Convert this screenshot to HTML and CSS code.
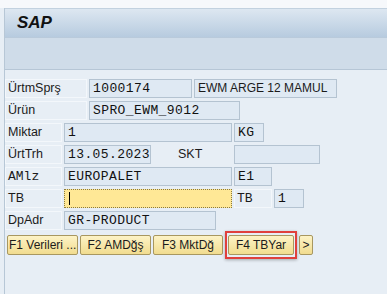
FILE: index.html
```html
<!DOCTYPE html>
<html lang="tr">
<head>
<meta charset="UTF-8">
<title>SAP</title>
<link rel="stylesheet" href="styles.css">
</head>
<body>
<div class="top"></div>
<div class="win">
    <div class="tb-title">SAP</div>
    <div class="tb-tools"></div>
    <div class="ct">
        <div class="r">
            <div class="lb w1">ÜrtmSprş</div>
            <div class="in m" style="width:103px">1000174</div>
            <div class="in s" style="width:143px">EWM ARGE 12 MAMUL</div>
        </div>
        <div class="r">
            <div class="lb w1">Ürün</div>
            <div class="in m" style="width:151px">SPRO_EWM_9012</div>
        </div>
        <div class="r">
            <div class="lb w2">Miktar</div>
            <div class="in m" style="width:168px">1</div>
            <div class="in m" style="width:30px">KG</div>
        </div>
        <div class="r">
            <div class="lb w2">ÜrtTrh</div>
            <div class="in m" style="width:87px">13.05.2023</div>
            <div class="lb skt">SKT</div>
            <div class="in m" style="width:86px"></div>
        </div>
        <div class="r">
            <div class="lb w2 lm">AMlz</div>
            <div class="in m" style="width:168px">EUROPALET</div>
            <div class="in m" style="width:38px">E1</div>
        </div>
        <div class="r">
            <div class="lb w2">TB</div>
            <div class="in m act" style="width:168px"><span class="cur"></span></div>
            <div class="lb lm tbl">TB</div>
            <div class="in m" style="width:30px">1</div>
        </div>
        <div class="r">
            <div class="lb w2">DpAdr</div>
            <div class="in m" style="width:152px">GR-PRODUCT</div>
        </div>
        <div class="btns">
            <button class="bt" style="width:71px">F1 Verileri ...</button>
            <button class="bt" style="width:71px">F2 AMDğş</button>
            <button class="bt" style="width:70px">F3 MktDğ</button>
            <span class="hl"><button class="bt" style="width:66px">F4 TBYar</button></span>
            <button class="bt" style="width:14px">&gt;</button>
        </div>
    </div>
</div>
</body>
</html>
```

FILE: styles.css
```css
*{margin:0;padding:0;box-sizing:border-box}
body{background:#e7eef5;font-family:'Liberation Sans',Arial,sans-serif;color:#1b1b1b;width:387px;height:294px;overflow:hidden}

/* window frame */
.top{height:8px;background:#f6f8fb}
.win{margin-left:4px;border-left:1px solid #b7c7d6;height:286px;background:#e7eef5}
.tb-title{height:30px;background:linear-gradient(180deg,#dde7f1,#b7cbdf);border-top:1px solid #c2d1df;border-bottom:1px solid #b9cadb;font-weight:bold;font-style:italic;font-size:17px;line-height:28px;padding-left:12px;color:#111}
.tb-tools{height:32px;background:#cfdce9;border-bottom:1px solid #b6c6d6}

/* form rows */
.ct{padding-top:9px}
.r{display:flex;height:19px;margin-bottom:3px;gap:2px}
.lb{height:19px;border:1px solid #f3f7fb;font-size:12.5px;line-height:17px;padding-left:2px;white-space:nowrap}
.lb.w1{width:82px}
.lb.w2{width:57px}
.lb.lm{font-family:'Liberation Mono','Courier New',monospace;font-size:13px}
.lb.skt{width:79px;padding-left:24px;border-color:transparent}
.lb.tbl{width:38px;padding-left:2px}
.in{height:19px;background:#dfe9f3;border:1px solid #b4c3d1;padding-left:3px;line-height:17px;white-space:nowrap;overflow:hidden}
.in.m{font-family:'Liberation Mono','Courier New',monospace;font-size:13px;letter-spacing:.4px;color:#111}
.in.s{font-size:12px}
.in.act{background:#ffe896;border:1px dotted #8a7a40}
.cur{display:inline-block;width:1px;height:13px;background:#000;vertical-align:middle;margin-left:1px}

/* function keys */
.btns{display:flex;align-items:center;gap:2px;padding-left:2px;margin-top:-2px}
.bt{height:20px;background:linear-gradient(180deg,#fdf3c6,#f1dc8f);border:1px solid #a89760;border-radius:2px;font-family:'Liberation Sans',Arial,sans-serif;font-size:12px;color:#1b1b1b;white-space:nowrap;overflow:hidden;padding:0 1px}
.hl{display:flex;border:2px solid #e0403d;padding:2px 1px;box-shadow:0 1px 3px rgba(0,0,0,.3)}
```
